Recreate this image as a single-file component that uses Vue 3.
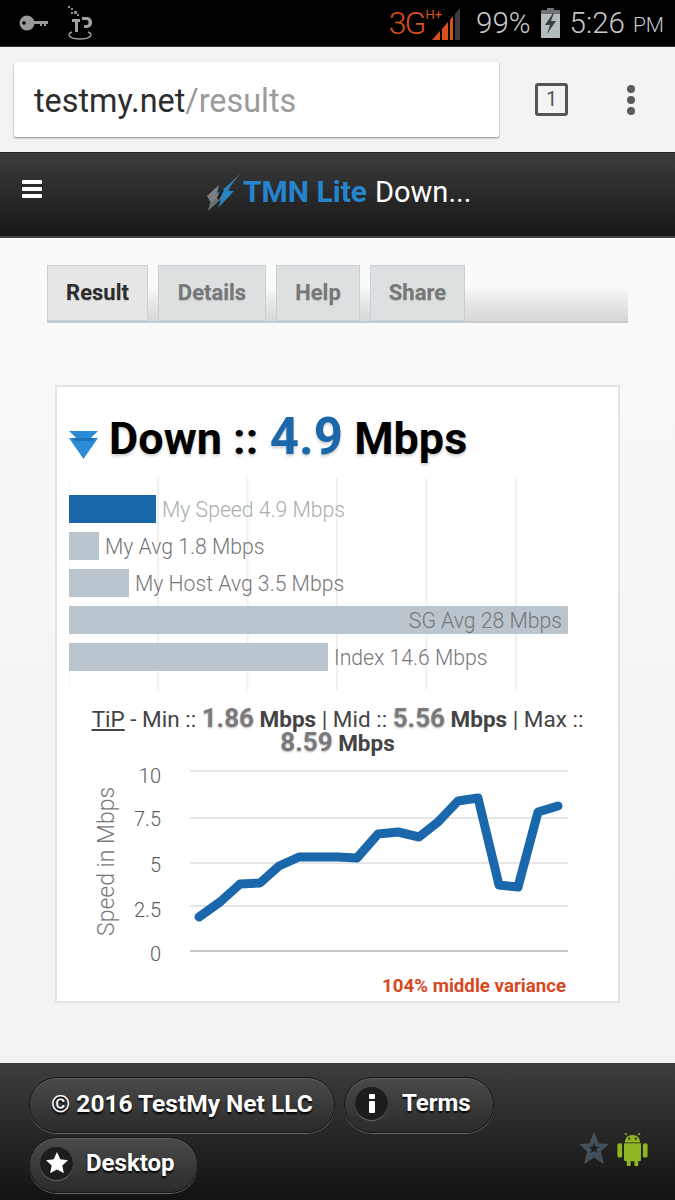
<script setup>
const tabs = [
  { name: 'Result', width: 101, active: true },
  { name: 'Details', width: 108 },
  { name: 'Help', width: 84 },
  { name: 'Share', width: 95 }
]

const bars = [
  { label: 'My Speed 4.9 Mbps', width: 87, cls: 'bar--mine' },
  { label: 'My Avg 1.8 Mbps', width: 30 },
  { label: 'My Host Avg 3.5 Mbps', width: 60 },
  { label: 'SG Avg 28 Mbps', width: 499, inside: true },
  { label: 'Index 14.6 Mbps', width: 259 }
]

const gridY = [771, 818, 863, 906]

const ticks = [
  { label: '10', y: 783 },
  { label: '7.5', y: 826 },
  { label: '5', y: 872 },
  { label: '2.5', y: 917 },
  { label: '0', y: 961 }
]

const speeds = [
  [199, 917], [220, 902], [240, 884], [260, 883], [279, 866], [299, 857],
  [320, 857], [338, 857], [357, 858], [378, 834], [398, 832], [419, 837],
  [438, 822], [458, 801], [478, 798], [499, 885], [518, 887], [538, 812], [558, 806]
]

const linePoints = speeds.map(p => p.join(',')).join(' ')
</script>

<template>
  <div class="page">
    <div class="status">
      <svg class="status__key" width="30" height="16" viewBox="0 0 30 16">
        <circle cx="8" cy="8" r="7.5" fill="#9a9a9a" />
        <circle cx="5" cy="8" r="1.8" fill="#000" />
        <path d="M14 6h15v3h-2v2h-2V9h-2v2h-2V9h-7z" fill="#9a9a9a" />
      </svg>
      <svg class="status__ip" width="26" height="36" viewBox="0 0 26 36">
        <path d="M1 1h2v2H1zM4 3h2v2H4zM7 6h3v3H7zM4 7h2v2H4zM10 9h2v2h-2z" fill="#8d8d8d" />
        <path d="M5 14h8v3h-2v10H8V17H5zM15 12h5a5 5 0 0 1 5 5v1a5 5 0 0 1-5 5h-3v-3h2.500a2 2 0 0 0 2-2v-1a2 2 0 0 0-2-2H15z" fill="#a2a2a2" />
        <path d="M5 27c-6 2-3 7 8 7s14-5 8-7" fill="none" stroke="#9a9a9a" stroke-width="1.500" />
      </svg>
      <div class="status__right">
        <span class="status__net">3G</span>
        <span class="status__hplus">H+</span>
        <svg class="status__signal" width="30" height="38" viewBox="0 0 30 38">
          <path d="M1 36 9 27v9zM11 25l6-7v18h-6z" fill="#d9501e" />
          <path d="M19 16l3-4v24h-3z" fill="#d9501e" />
          <path d="M24 10l5-6v32h-5z" fill="#3d3d3d" />
        </svg>
        <span class="status__pct">99%</span>
        <svg class="status__batt" width="19" height="30" viewBox="0 0 19 30">
          <path d="M6 0h7v2h6v28H0V2h6z" fill="#b4bcc0" />
          <path d="M6 0h7v2h6v4H0V2h6z" fill="#6e7376" />
          <path d="M12 5 4 17h5l-3 9 9-13h-5l3-8z" fill="#3c3f41" />
        </svg>
        <span class="status__time">5:26</span>
        <span class="status__ampm">PM</span>
      </div>
    </div>

    <div class="toolbar">
      <div class="omnibox">testmy.net<span class="omnibox__path">/results</span></div>
      <div class="tabcount">1</div>
      <div class="dots"><i></i><i></i><i></i></div>
    </div>

    <header class="site-head">
      <div class="burger"><i></i><i></i><i></i></div>
      <div class="brand">
        <svg class="brand__bolt" width="36" height="38" viewBox="0 0 36 38">
          <path d="M35 0 4 30l-2 8 19-17 4-9z" fill="#6a6e71" />
          <path d="M1 23 13 12l-2 8 5-1L5 30z" fill="#7c8083" />
          <path d="M31 4 21 18h7L12 35l5-14h-7L20 14z" fill="#2585c7" />
          <path d="M15 16l3 1-5 10-2-2z" fill="#1c1c1c" />
        </svg>
        <span class="brand__tmn">TMN Lite</span>
        <span class="brand__title">Down...</span>
      </div>
    </header>

    <main class="content">
      <nav class="tabbar">
        <div
          v-for="tab in tabs"
          :key="tab.name"
          class="tab"
          :class="{ 'tab--active': tab.active }"
          :style="{ width: tab.width + 'px' }"
        >{{ tab.name }}</div>
      </nav>

      <section class="card">
        <h1 class="speed">
          <svg class="speed__arrow" width="29" height="29" viewBox="0 0 29 29">
            <path d="M0 1h29L14.500 15z" fill="#2b8bd6" />
            <path d="M0 8h29L14.500 29z" fill="#2b8bd6" />
            <path d="M3 8h23l-3 3H6z" fill="#1f74b8" />
          </svg>Down :: <span class="speed__num">4.9</span> Mbps
        </h1>

        <div class="bars">
          <div v-for="bar in bars" :key="bar.label" class="bars__row">
            <div class="bar" :class="bar.cls" :style="{ width: bar.width + 'px' }">
              <span v-if="bar.inside" class="bar__inner">{{ bar.label }}</span>
            </div>
            <span v-if="!bar.inside" class="bars__label" :class="{ 'bars__label--light': bar.cls }">{{ bar.label }}</span>
          </div>
        </div>

        <p class="tip">
          <u>TiP</u> - Min :: <b class="tip__num">1.86</b> <b>Mbps</b> | Mid :: <b class="tip__num">5.56</b> <b>Mbps</b> | Max :: <b class="tip__num">8.59</b>&nbsp;<b>Mbps</b>
        </p>

        <svg class="graph" width="561" height="240" viewBox="57 765 561 240">
          <line v-for="y in gridY" :key="y" x1="190" x2="568" :y1="y" :y2="y" stroke="#e4e6e8" stroke-width="2" />
          <line x1="190" x2="568" y1="951" y2="951" stroke="#c2c6ca" stroke-width="2" />
          <text
            v-for="t in ticks"
            :key="t.label"
            x="161"
            :y="t.y"
            text-anchor="end"
            class="graph__tick"
          >{{ t.label }}</text>
          <text class="graph__axis" transform="translate(114 936) rotate(-90)">Speed in Mbps</text>
          <polyline
            :points="linePoints"
            fill="none"
            stroke="#1a68ab"
            stroke-width="9"
            stroke-linejoin="round"
            stroke-linecap="round"
          />
          <text class="graph__note" x="566" y="992" text-anchor="end">104% middle variance</text>
        </svg>
      </section>
    </main>

    <footer class="site-foot">
      <div class="pills">
        <div class="pill pill--copy">© 2016 TestMy Net LLC</div>
        <div class="pill pill--terms">
          <span class="disc">
            <svg width="8" height="19" viewBox="0 0 8 19">
              <rect x="1" y="0" width="6" height="5" rx="1" fill="#fff" />
              <rect x="1" y="7" width="6" height="12" rx="1" fill="#fff" />
            </svg>
          </span>
          Terms
        </div>
        <div class="pill pill--desktop">
          <span class="disc">
            <svg width="24" height="24" viewBox="0 0 24 24">
              <path d="M12 1l3.300 7.300 7.700.9-5.700 5.300 1.600 7.800L12 18.400l-6.900 3.900 1.600-7.800L1 9.200l7.700-.9z" fill="#fff" />
            </svg>
          </span>
          Desktop
        </div>
      </div>
      <div class="badges">
        <svg width="30" height="32" viewBox="0 0 30 35">
          <path d="M15 0l4.500 12 10.500.5-8.200 7.800L25 33l-10-7-10 7 3.200-12.700L0 12.500 10.500 12z" fill="#3e4f5d" stroke="#55595c" stroke-width="1" />
          <path d="M15 11l1.500 4 4 .2-3 2.700 1 4.100-3.500-2.300L11.500 22l1-4.100-3-2.700 4-.2z" fill="#1c1f21" />
        </svg>
        <svg width="31" height="33" viewBox="0 0 32 35">
          <path d="M8 10c0-5 3-8 8-8s8 3 8 8z" fill="#8fb522" />
          <path d="M10 2 8 0M22 2l2-2" stroke="#8fb522" stroke-width="1.500" />
          <rect x="0" y="11" width="5" height="15" rx="2" fill="#8fb522" />
          <rect x="27" y="11" width="5" height="15" rx="2" fill="#8fb522" />
          <path d="M7 11h18v17a2 2 0 0 1-2 2h-1v5h-4v-5h-4v5h-4v-5H9a2 2 0 0 1-2-2z" fill="#8fb522" />
          <rect x="11.500" y="5" width="2" height="2" fill="#222" />
          <rect x="18.500" y="5" width="2" height="2" fill="#222" />
        </svg>
      </div>
    </footer>
  </div>
</template>

<style scoped>
.page {
  width: 675px;
  height: 1200px;
  overflow: hidden;
  display: flex;
  flex-direction: column;
  font-family: Roboto, "Liberation Sans", sans-serif;
  background: #f6f6f6;
}

.status {
  height: 47px;
  flex: none;
  background: #000;
  display: flex;
  align-items: center;
  padding-left: 19px;
  border-bottom: 1px solid #333;
  box-sizing: border-box;
}

.status__ip {
  margin-left: 18px;
}

.status__right {
  margin-left: auto;
  display: flex;
  align-items: center;
  padding-right: 11px;
  color: #c6c9cb;
  font-weight: 300;
}

.status__net {
  color: #d9501e;
  font-size: 32px;
  letter-spacing: -2px;
}

.status__hplus {
  color: #d9501e;
  font-size: 13px;
  font-weight: 400;
  align-self: flex-start;
  margin: 3px -11px 0 1px;
}

.status__signal {
  margin-right: 15px;
}

.status__pct {
  font-size: 29.5px;
}

.status__batt {
  margin: 0 10px;
}

.status__time {
  font-size: 29.5px;
}

.status__ampm {
  font-size: 21px;
  margin: 4px 0 0 8px;
}

.toolbar {
  height: 105px;
  flex: none;
  background: #f3f3f3;
  display: flex;
  align-items: center;
  padding-left: 14px;
  box-sizing: border-box;
}

.omnibox {
  width: 485px;
  height: 75px;
  box-sizing: border-box;
  margin-top: -1px;
  padding: 0 0 0 20px;
  background: #fff;
  border-radius: 2px;
  box-shadow: 0 1px 2px rgba(0, 0, 0, 0.45);
  color: #2d2d2d;
  font-size: 32.4px;
  line-height: 79px;
}

.omnibox__path {
  color: #9b9b9b;
}

.tabcount {
  width: 33px;
  height: 33px;
  box-sizing: border-box;
  margin-left: 36px;
  border: 3px solid #555;
  border-radius: 3px;
  color: #555;
  font-size: 20px;
  font-weight: 400;
  line-height: 27px;
  text-align: center;
}

.dots {
  margin-left: 59px;
  display: flex;
  flex-direction: column;
  gap: 3px;
}

.dots i {
  width: 8px;
  height: 8px;
  border-radius: 50%;
  background: #5a5a5a;
}

.site-head {
  height: 86px;
  flex: none;
  box-sizing: border-box;
  display: flex;
  align-items: center;
  background: linear-gradient(#3c3c3c, #171717);
  border-top: 1px solid #222;
  border-bottom: 2px solid #444;
}

.burger {
  margin: -12px 0 0 22px;
  display: flex;
  flex-direction: column;
  gap: 3px;
}

.burger i {
  width: 20px;
  height: 4px;
  border-radius: 1px;
  background: #fff;
}

.brand {
  margin: -6px 0 0 164px;
  display: flex;
  align-items: center;
  font-size: 29px;
}

.brand__bolt {
  margin-right: 1px;
}

.brand__tmn {
  color: #2584cc;
  font-size: 30px;
  font-weight: 700;
}

.brand__title {
  color: #fff;
  font-weight: 400;
  margin-left: 8px;
}

.content {
  flex: 1;
  padding: 27px 47px 0;
  box-sizing: border-box;
  background: linear-gradient(#fafafa, #f2f2f2);
}

.tabbar {
  width: 581px;
  height: 58px;
  display: flex;
  gap: 10px;
  box-sizing: border-box;
  border-bottom: 2px solid #c5cdd3;
  background: linear-gradient(transparent 40%, #e8e8e8 65%, #d8d8d8 100%);
}

.tab {
  height: 56px;
  box-sizing: border-box;
  border: 1px solid #c9d0d5;
  background: #dde0e1;
  color: #777;
  font-size: 22px;
  font-weight: 700;
  line-height: 54px;
  text-align: center;
  text-shadow: 0 1px 1px rgba(0, 0, 0, 0.15);
}

.tab--active {
  background: #e6e6e6;
  color: #2d2d2d;
}

.card {
  width: 565px;
  height: 618px;
  box-sizing: border-box;
  margin: 62px 0 0 8px;
  padding: 0 12px;
  background: #fff;
  border: 2px solid #e3e3e3;
}

.speed {
  height: 106px;
  margin: 0;
  color: #000;
  font-size: 45px;
  font-weight: 700;
  line-height: 100px;
  white-space: nowrap;
  text-shadow: 0 2px 3px rgba(0, 0, 0, 0.2);
}

.speed__arrow {
  margin-right: 11px;
  vertical-align: -5px;
}

.speed__num {
  color: #1a68ab;
  font-size: 51px;
}

.bars {
  width: 450px;
  height: 212px;
  margin-top: -15px;
  padding-top: 17px;
  box-sizing: border-box;
  background-image: linear-gradient(90deg, #f1f1f1 2px, transparent 2px);
  background-size: 89.5px 100%;
  background-position: 88px 0;
  background-repeat: repeat-x;
}

.bars__row {
  height: 28px;
  display: flex;
  align-items: center;
  margin-bottom: 9px;
  white-space: nowrap;
}

.bar {
  height: 28px;
  background: #bac5cd;
  display: flex;
  align-items: center;
  justify-content: flex-end;
  flex: none;
}

.bar--mine {
  background: #1a68ab;
}

.bar__inner,
.bars__label {
  color: #777;
  font-size: 21.2px;
  font-weight: 300;
}

.bar__inner {
  margin-right: 6px;
}

.bars__label {
  margin-left: 6px;
}

.bars__label--light {
  color: #a9aeb1;
}

.tip {
  margin: 17px -10px 0;
  color: #444;
  font-size: 22.5px;
  line-height: 23px;
  font-weight: 400;
  text-align: center;
}

.tip b {
  font-weight: 700;
  color: #444;
}

.tip .tip__num {
  color: #7a7a7a;
  font-size: 26px;
  text-shadow: 0 1px 2px rgba(0, 0, 0, 0.3);
}

.graph {
  display: block;
  margin: 10px 0 0 -12px;
}

.graph__tick {
  fill: #5b5b5b;
  font-size: 20px;
  font-weight: 300;
}

.graph__axis {
  fill: #777;
  font-size: 23px;
  font-weight: 300;
}

.graph__note {
  fill: #d8481f;
  font-size: 18.7px;
  font-weight: 700;
}

.site-foot {
  height: 137px;
  flex: none;
  box-sizing: border-box;
  display: flex;
  padding: 14px 27px 0 29px;
  background: linear-gradient(#3d3d3d, #121212);
}

.pills {
  width: 480px;
  display: flex;
  flex-wrap: wrap;
  align-content: flex-start;
  gap: 4px 9px;
}

.pill {
  height: 56px;
  box-sizing: border-box;
  padding-bottom: 4px;
  display: flex;
  align-items: center;
  border: 1px solid #161616;
  border-radius: 28px;
  background: linear-gradient(#4a4a4a, #2b2b2b);
  box-shadow: 0 1px 0 #666, inset 0 1px 0 #5e5e5e;
  color: #fff;
  font-size: 24px;
  font-weight: 700;
  text-shadow: 0 2px 2px #000;
}

.pill--copy {
  width: 306px;
  padding-left: 21px;
  font-size: 24.5px;
}

.pill--terms {
  width: 150px;
  padding-left: 10px;
  gap: 14px;
}

.pill--desktop {
  width: 169px;
  padding-left: 10px;
  gap: 13px;
}

.disc {
  width: 33px;
  height: 33px;
  flex: none;
  display: flex;
  align-items: center;
  justify-content: center;
  border-radius: 50%;
  background: #1d1d1d;
  box-shadow: 0 1px 0 #666;
}

.badges {
  margin: 56px 0 0 auto;
  display: flex;
  gap: 8px;
  height: 35px;
}
</style>

<style>
html, body {
  background: #f6f6f6;
}
</style>
